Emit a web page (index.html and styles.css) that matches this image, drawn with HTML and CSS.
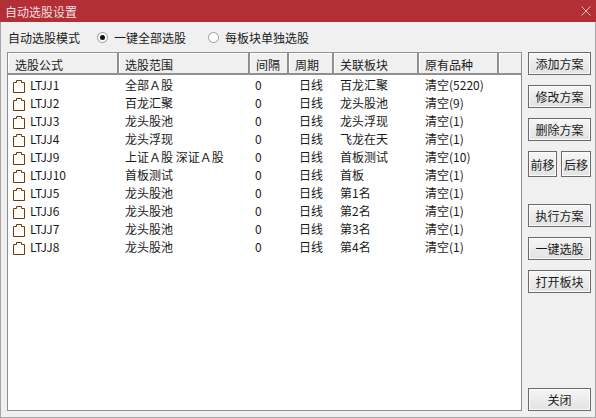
FILE: index.html
```html
<!DOCTYPE html>
<html>
<head>
  <meta charset='utf-8'>
  <title>自动选股设置</title>
<link rel="stylesheet" href="styles.css">
</head>
<body>
  <div class="window">
    <div class="titlebar">
      <span>自动选股设置</span>
      <svg class="close" width="10" height="10" viewBox="0 0 10 10"><path d="M0.5 0.5L9.5 9.5M9.5 0.5L0.5 9.5" stroke="#e9c4c6" stroke-width="1" fill="none"/></svg>
    </div>
    <div class="content">
      <div class="mode">
        <span class="mode-label">自动选股模式</span>
        <span class="radio checked">一键全部选股</span>
        <span class="radio">每板块单独选股</span>
      </div>
      <div class="main">
        <div class="list">
          <table>
            <colgroup>
              <col class="c1"><col class="c2"><col class="c3"><col class="c4"><col class="c5"><col class="c6"><col>
            </colgroup>
            <thead>
              <tr><th>选股公式</th><th>选股范围</th><th>间隔</th><th>周期</th><th>关联板块</th><th>原有品种</th><th></th></tr>
            </thead>
            <tbody id="rows"></tbody>
          </table>
        </div>
        <div class="side">
          <a class="button">添加方案</a>
          <a class="button">修改方案</a>
          <a class="button">删除方案</a>
          <div class="pair">
            <a class="button small prev">前移</a>
            <a class="button small next">后移</a>
          </div>
          <a class="button run">执行方案</a>
          <a class="button">一键选股</a>
          <a class="button">打开板块</a>
          <a class="button quit">关闭</a>
        </div>
      </div>
    </div>
  </div>
  <script>
const rows = [
  ['LTJJ1', '全部Ａ股', '百龙汇聚', '清空(5220)'],
  ['LTJJ2', '百龙汇聚', '龙头股池', '清空(9)'],
  ['LTJJ3', '龙头股池', '龙头浮现', '清空(1)'],
  ['LTJJ4', '龙头浮现', '飞龙在天', '清空(1)'],
  ['LTJJ9', '上证Ａ股 深证Ａ股', '首板测试', '清空(10)'],
  ['LTJJ10', '首板测试', '首板', '清空(1)'],
  ['LTJJ5', '龙头股池', '第1名', '清空(1)'],
  ['LTJJ6', '龙头股池', '第2名', '清空(1)'],
  ['LTJJ7', '龙头股池', '第3名', '清空(1)'],
  ['LTJJ8', '龙头股池', '第4名', '清空(1)'],
];
const icon = '<svg class="icon" width="12" height="13" viewBox="0 0 12 13"><path d="M0.5 2.5H3.5V0.5H8.5V2.5H11.5V12.5H0.5Z" fill="#fffdf8" stroke="#6e3a12" stroke-width="1"/></svg>';
document.getElementById('rows').innerHTML = rows.map((r) => `<tr>
  <td class="name">${icon}${r[0]}</td><td>${r[1]}</td><td>0</td><td>日线</td><td>${r[2]}</td><td>${r[3]}</td><td></td>
</tr>`).join('');
  </script>
</body>
</html>
```

FILE: styles.css
```css
html, body {
  margin: 0;
  padding: 0;
}
body {
  font-family: "Noto Sans CJK SC", "Noto Sans", sans-serif;
  font-size: 12px;
  color: #1a1a1a;
}
.window {
  width: 596px;
  height: 418px;
  box-sizing: border-box;
  display: flex;
  flex-direction: column;
  background: #f0f0f0;
  border: 1px solid #a6a6a6;
  border-top: none;
}
.titlebar {
  height: 22px;
  margin: 0 -1px;
  padding: 0 6px 0 5px;
  flex: none;
  display: flex;
  justify-content: space-between;
  align-items: center;
  background: #b22f36;
  color: #f4dfe0;
}
.close {
  margin-right: -1px;
}
.content {
  flex: 1;
  display: flex;
  flex-direction: column;
  padding: 0 4px 6px 6px;
  min-height: 0;
}
.mode {
  height: 30px;
  display: flex;
  align-items: center;
}
.mode-label {
  width: 89px;
  margin-left: 1px;
}
.radio {
  position: relative;
  padding-left: 17px;
  width: 94px;
}
.radio::before {
  content: "";
  position: absolute;
  left: 0;
  top: 50%;
  width: 9px;
  height: 9px;
  margin-top: -5px;
  border: 1px solid #9a9a9a;
  border-radius: 50%;
  background: #fff;
}
.radio.checked::after {
  content: "";
  position: absolute;
  left: 3px;
  top: 50%;
  width: 5px;
  height: 5px;
  margin-top: -2px;
  border-radius: 50%;
  background: #111;
}
.main {
  flex: 1;
  display: flex;
  gap: 6px;
  min-height: 0;
}
.list {
  width: 515px;
  box-sizing: border-box;
  background: #fff;
  border: 1px solid #8f8f8f;
  overflow: hidden;
}
table {
  width: 513px;
  table-layout: fixed;
  border-collapse: collapse;
}
.c1 { width: 110px; }
.c2 { width: 131px; }
.c3 { width: 39px; }
.c4 { width: 45px; }
.c5 { width: 85px; }
.c6 { width: 80px; }
th {
  height: 21px;
  box-sizing: border-box;
  padding: 2px 0 0 6px;
  text-align: left;
  font-weight: normal;
  background: #f0f0f0;
  border-right: 2px solid #8f8f8f;
  border-bottom: 2px solid #8f8f8f;
  box-shadow: inset 1px 1px 0 #fff;
}
th:first-child {
  padding-left: 7px;
}
th:last-child {
  border-right: none;
}
td {
  height: 18px;
  padding: 0 0 0 6px;
  white-space: nowrap;
}
td:nth-child(2) { padding-left: 7px; }
td:nth-child(3) { padding-left: 6px; }
td:nth-child(4) { padding-left: 11px; }
td:nth-child(5) { padding-left: 7px; }
td:nth-child(6) { padding-left: 7px; }
.name {
  padding-left: 5px;
}
.icon {
  vertical-align: -3px;
  margin-right: 5px;
}
.side {
  width: 63px;
  display: flex;
  flex-direction: column;
}
.button {
  height: 23px;
  flex: none;
  box-sizing: border-box;
  display: flex;
  align-items: center;
  justify-content: center;
  border: 1px solid #6a6a6a;
  box-shadow: inset 0 0 0 1px #fbfbfb;
  background: linear-gradient(#f6f6f6, #e2e2e2);
  margin-bottom: 10px;
}
.pair {
  display: flex;
  justify-content: space-between;
}
.small {
  height: 26px;
  margin-bottom: 0;
}
.prev { width: 29px; }
.next { width: 30px; }
.run { margin-top: 27px; }
.quit {
  margin-top: auto;
  margin-bottom: 0;
}
```
